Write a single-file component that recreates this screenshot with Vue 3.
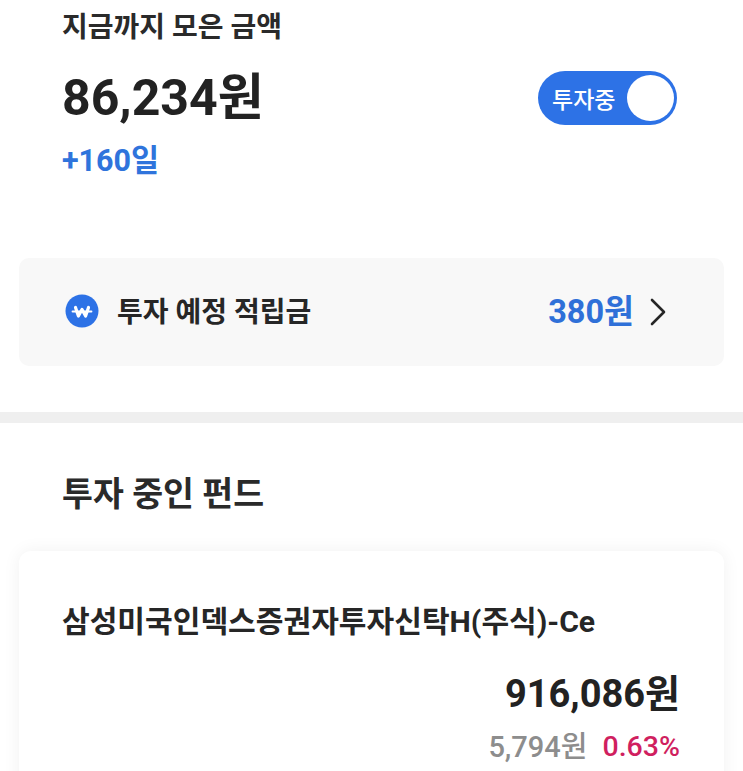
<script setup>
const total = "86,234원";
const days = "+160일";
const fund = {
  name: "삼성미국인덱스증권자투자신탁H(주식)-Ce",
  amount: "916,086원",
  profit: "5,794원",
  rate: "0.63%"
};
</script>

<template>
  <div class="page">
    <section class="summary">
      <div class="label">지금까지 모은 금액</div>
      <div class="total-row">
        <div class="total">{{ total }}</div>
        <div class="toggle">
          <span class="toggle-text">투자중</span>
          <span class="knob"></span>
        </div>
      </div>
      <div class="days">{{ days }}</div>
      <div class="reserve">
        <svg class="won" width="34" height="34" viewBox="0 0 34 34">
          <circle cx="17" cy="17" r="16.5" fill="#2d72e6" />
          <path d="M10.5 13.5 L13.4 22 L17 15.5 L20.6 22 L23.5 13.5" fill="none" stroke="#fff" stroke-width="3.2" stroke-linejoin="round" stroke-linecap="round" />
          <path d="M7.5 17.5 H26.5" stroke="#fff" stroke-width="1.8" stroke-linecap="round" />
        </svg>
        <span class="reserve-label">투자 예정 적립금</span>
        <span class="reserve-value">380원</span>
        <svg class="chevron" width="16" height="28" viewBox="0 0 16 28">
          <path d="M2 2 L14 14 L2 26" fill="none" stroke="#262626" stroke-width="2.6" stroke-linecap="round" stroke-linejoin="round" />
        </svg>
      </div>
    </section>

    <div class="divider"></div>

    <section class="funds">
      <h2 class="funds-title">투자 중인 펀드</h2>
      <div class="card">
        <div class="fund-name">{{ fund.name }}</div>
        <div class="fund-amount">{{ fund.amount }}</div>
        <div class="fund-sub">
          <span class="profit">{{ fund.profit }}</span>
          <span class="rate">{{ fund.rate }}</span>
        </div>
      </div>
    </section>
  </div>
</template>

<style scoped>
.page {
  width: 743px;
  height: 771px;
  overflow: hidden;
  background: #fff;
  font-family: Roboto, "Noto Sans CJK KR", sans-serif;
  color: #222;
}

.summary {
  padding: 10px 19px 46px;
}

.label {
  padding-left: 43px;
  font-size: 28px;
  line-height: 36px;
  font-weight: 700;
  color: #2a2a2a;
}

.total-row {
  display: flex;
  align-items: center;
  justify-content: space-between;
  margin-top: 20px;
  padding: 0 47px 0 43px;
}

.total {
  font-size: 50px;
  line-height: 64px;
  font-weight: 700;
  color: #222;
}

.toggle {
  display: flex;
  align-items: center;
  justify-content: space-between;
  width: 139px;
  height: 54px;
  box-sizing: border-box;
  padding: 0 3px 0 14px;
  border-radius: 27px;
  background: #2d72e6;
}

.toggle-text {
  font-size: 23px;
  font-weight: 500;
  color: #fff;
}

.knob {
  width: 47px;
  height: 46px;
  border-radius: 50%;
  background: #fff;
}

.days {
  padding-left: 43px;
  margin-top: 12px;
  font-size: 30.5px;
  line-height: 38px;
  font-weight: 700;
  color: #2f74dc;
}

.reserve {
  display: flex;
  align-items: center;
  height: 108px;
  margin-top: 78px;
  padding: 0 58px 0 46px;
  border-radius: 10px;
  background: #f8f8f8;
}

.won {
  flex: none;
  margin-bottom: 2px;
}

.reserve-label {
  margin-left: 18px;
  margin-bottom: 4px;
  font-size: 28px;
  font-weight: 700;
  color: #262626;
}

.reserve-value {
  margin-left: auto;
  margin-bottom: 7px;
  font-size: 32.5px;
  font-weight: 700;
  color: #2f70d8;
}

.chevron {
  margin-left: 16px;
}

.divider {
  height: 11px;
  background: #efefef;
}

.funds {
  padding: 50px 19px 0;
}

.funds-title {
  margin: 0;
  padding-left: 43px;
  font-size: 33.6px;
  line-height: 44px;
  font-weight: 700;
  color: #2a2a2a;
}

.card {
  margin-top: 34px;
  padding: 51px 43px 0;
  height: 300px;
  border-radius: 12px;
  background: #fff;
  box-shadow: 0 0 18px rgba(0, 0, 0, 0.06);
}

.fund-name {
  font-size: 30.1px;
  line-height: 40px;
  font-weight: 700;
  color: #262626;
}

.fund-amount {
  margin-top: 27px;
  margin-right: 1px;
  text-align: right;
  font-size: 38px;
  line-height: 50px;
  font-weight: 700;
  color: #222;
}

.fund-sub {
  display: flex;
  justify-content: flex-end;
  gap: 15px;
  margin-top: 8px;
  margin-right: 1px;
  line-height: 40px;
}

.profit {
  font-size: 29px;
  font-weight: 500;
  color: #8d8d8d;
}

.rate {
  font-size: 28.5px;
  font-weight: 500;
  color: #d01f5f;
}
</style>
